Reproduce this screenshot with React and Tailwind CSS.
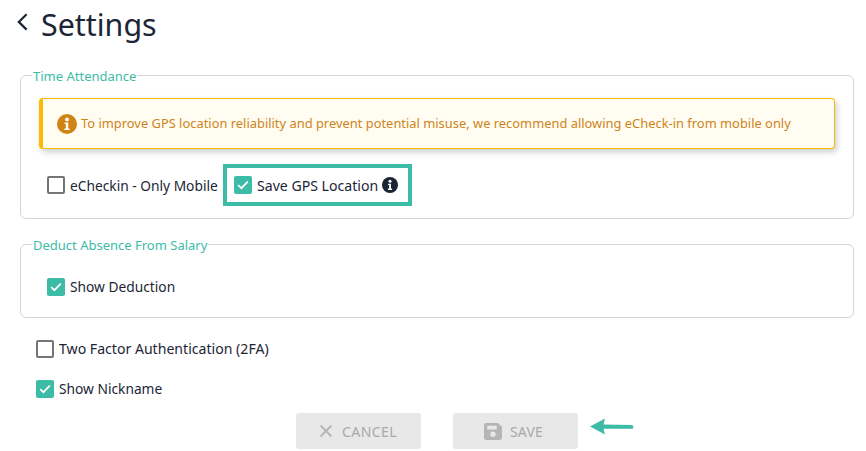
import React from "react";

function Check({ checked }) {
  return checked ? (
    <span className="flex h-[18px] w-[18px] shrink-0 items-center justify-center rounded-[2px] bg-[#3cbca6]">
      <svg width="12" height="10" viewBox="0 0 12 10" fill="none">
        <path d="M1.2 5.2 L4.4 8.2 L10.8 1.6" stroke="#ffffff" strokeWidth="1.7" />
      </svg>
    </span>
  ) : (
    <span className="h-[18px] w-[18px] shrink-0 rounded-[2px] border-2 border-[#757575] bg-white" />
  );
}

function Row({ checked, label, className = "", textClass = "text-[13.75px]" }) {
  return (
    <div className={`flex items-center gap-[5px] ${className}`}>
      <Check checked={checked} />
      <span className={`pt-px leading-[20px] text-[#1c2536] ${textClass}`}>{label}</span>
    </div>
  );
}

function InfoIcon({ size, bg, className = "" }) {
  return (
    <svg width={size} height={size} viewBox="0 0 20 20" className={className}>
      <circle cx="10" cy="10" r="10" fill={bg} />
      <circle cx="10" cy="5.4" r="1.9" fill="#fff" />
      <path d="M7.6 8.4h3.6v6h1.4v1.7H7.4v-1.7h1.5v-4.3H7.6z" fill="#fff" />
    </svg>
  );
}

function Group({ title, className = "", children }) {
  return (
    <fieldset className={`rounded-[6px] border border-[#d3d5db] ${className}`}>
      <legend className="ml-[11px] px-[1px] pt-px text-[13px] leading-[18px] text-[#3cbca6]">{title}</legend>
      {children}
    </fieldset>
  );
}

export default function App() {
  return (
    <div className="h-[451px] w-[866px] overflow-hidden bg-white font-['Noto_Sans',sans-serif]">
      <header className="flex h-[66px] items-start pl-[17px] pt-[4px]">
        <svg width="11" height="18" viewBox="0 0 11 18" fill="none" className="mt-[9px]">
          <path d="M9.6 1.2 L1.8 8.9 L9.6 16.6" stroke="#1c2536" strokeWidth="2.2" />
        </svg>
        <h1 className="ml-[13px] text-[30.4px] leading-[42px] text-[#1c2536]">Settings</h1>
      </header>

      <div className="relative pl-[20px] pr-[12px]">
        <Group title="Time Attendance" className="h-[153px]">
          <div className="mx-[18px] mt-[13px] flex h-[51px] items-center gap-[4px] rounded-[4px] border border-l-[4px] border-[#fdb900] bg-[#fffdf2] pl-[14px] shadow-[2px_3px_6px_rgba(0,0,0,0.2)]">
            <InfoIcon size={20} bg="#d08414" />
            <span className="text-[12.9px] text-[#cf8320]">
              To improve GPS location reliability and prevent potential misuse, we recommend allowing eCheck-in from mobile only
            </span>
          </div>
          <div className="ml-[26px] mt-[15px] flex items-center">
            <Row label="eCheckin - Only Mobile" className="w-[171px]" />
            <div className="ml-[5px] flex h-[42px] w-[189px] items-center gap-[5px] border-4 border-[#3cbca6] pl-[7px]">
              <Check checked />
              <span className="pt-px text-[14.1px] leading-[20px] text-[#1c2536]">Save GPS Location</span>
              <InfoIcon size={16} bg="#1c2536" className="-ml-px" />
            </div>
          </div>
        </Group>

        <Group title="Deduct Absence From Salary" className="mt-[16px] h-[83px]">
          <Row checked label="Show Deduction" className="ml-[26px] mt-[22px]" />
        </Group>

        <Row label="Two Factor Authentication (2FA)" textClass="text-[14.1px]" className="mt-[20px] ml-[16px]" />
        <Row checked label="Show Nickname" className="mt-[19px] ml-[16px]" />

        <div className="mt-[14px] flex justify-center gap-[32px]">
          <button className="flex h-[36px] w-[125px] items-center justify-center gap-[9px] rounded-[3px] bg-[#e8e8e8] pr-px text-[14px] tracking-[0.4px] text-[#a9a9a9]">
            <svg width="14" height="14" viewBox="0 0 14 14" fill="none"><path d="M1.5 1.5 12.5 12.5M12.5 1.5 1.5 12.5" stroke="#b5b5b5" strokeWidth="1.8" /></svg>
            CANCEL
          </button>
          <div className="relative">
            <button className="flex h-[36px] w-[125px] items-center justify-center gap-[8px] rounded-[3px] bg-[#e8e8e8] pr-[4px] text-[14px] tracking-[0.2px] text-[#a9a9a9]">
              <svg width="18" height="17" viewBox="0 0 17 16"><path fillRule="evenodd" fill="#b5b5b5" d="M2 0h11l4 3.5V14a2 2 0 0 1-2 2H2a2 2 0 0 1-2-2V2a2 2 0 0 1 2-2zM3 2.5v3.5h9V2.5zM8.5 8a2.5 2.5 0 1 0 0 5 2.5 2.5 0 0 0 0-5z" /></svg>
              SAVE
            </button>
            <svg className="absolute left-[136px] top-[5px]" width="46" height="18" viewBox="0 0 46 18">
              <path d="M1 8.5 L16 0.5 L14.5 6.6 L42.5 7 a1.9 1.9 0 0 1 0 3.8 L14.5 10.8 L16 16.5 Z" fill="#3cbca6" />
            </svg>
          </div>
        </div>
      </div>
    </div>
  );
}
